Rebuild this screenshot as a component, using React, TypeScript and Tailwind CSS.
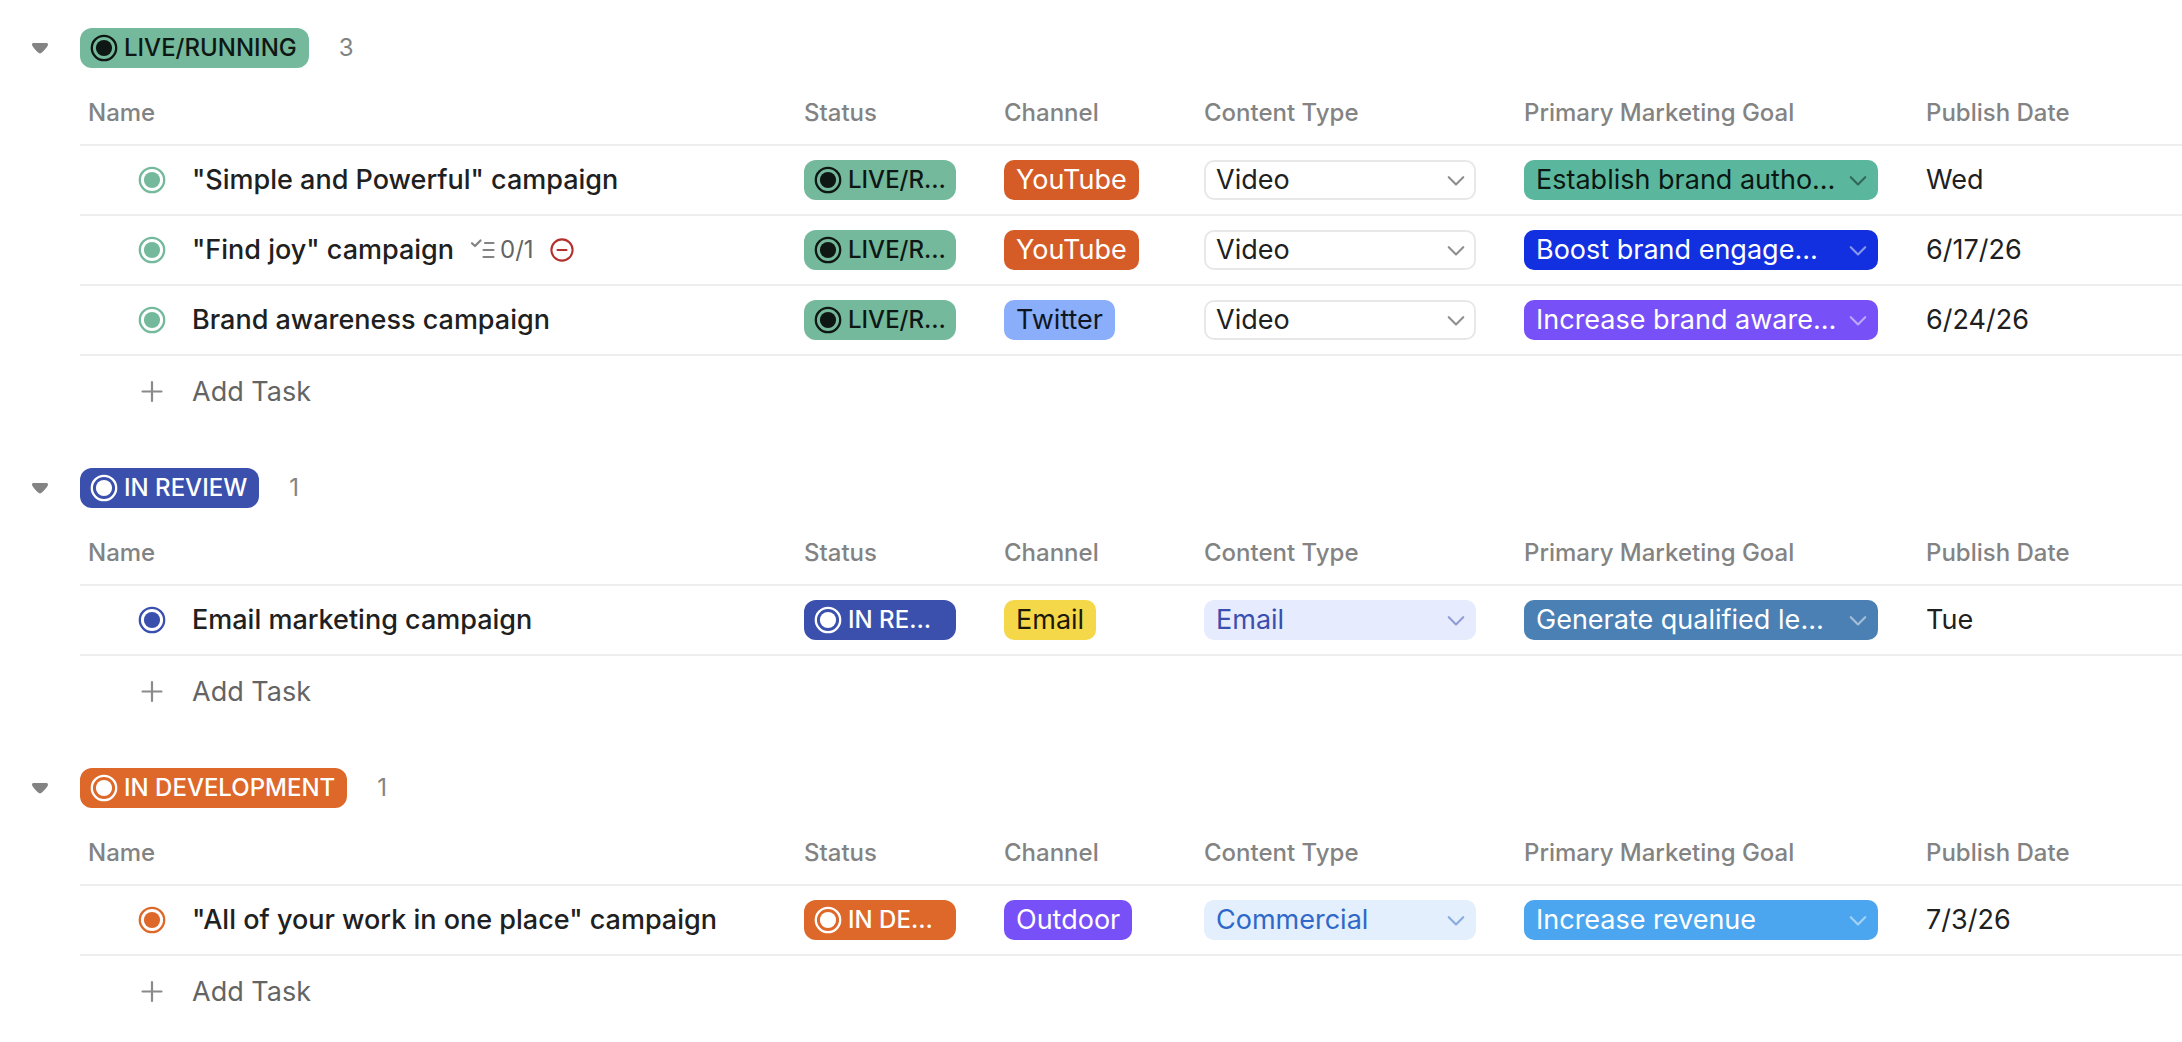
import { useState } from "react";

interface Select {
  label: string;
  style: string;
}

interface Task {
  name: string;
  subtasks?: string;
  blocked?: boolean;
  channel: Select;
  contentType: Select;
  goal: Select;
  publishDate: string;
}

interface Group {
  status: string;
  pill: string;
  icon: string;
  tasks: Task[];
}

const video: Select = {
  label: "Video",
  style: "bg-white text-[#202020] border-2 border-[#e8e8e8] pl-[10px]",
};

const youtube: Select = { label: "YouTube", style: "bg-[#d55c27] text-white" };

const groups: Group[] = [
  {
    status: "LIVE/RUNNING",
    pill: "bg-[#74b99b] text-[#0f1714]",
    icon: "text-[#74b99b]",
    tasks: [
      {
        name: '"Simple and Powerful" campaign',
        channel: youtube,
        contentType: video,
        goal: {
          label: "Establish brand authority",
          style: "bg-[#5ab79d] text-[#0c1713] pl-3",
        },
        publishDate: "Wed",
      },
      {
        name: '"Find joy" campaign',
        subtasks: "0/1",
        blocked: true,
        channel: youtube,
        contentType: video,
        goal: {
          label: "Boost brand engagement",
          style: "bg-[#1330e0] text-white pl-3",
        },
        publishDate: "6/17/26",
      },
      {
        name: "Brand awareness campaign",
        channel: { label: "Twitter", style: "bg-[#8aaefa] text-[#10161f]" },
        contentType: video,
        goal: {
          label: "Increase brand awareness",
          style: "bg-[#7850f8] text-white pl-3",
        },
        publishDate: "6/24/26",
      },
    ],
  },
  {
    status: "IN REVIEW",
    pill: "bg-[#3b4fad] text-white",
    icon: "text-[#3b4fad]",
    tasks: [
      {
        name: "Email marketing campaign",
        channel: { label: "Email", style: "bg-[#f4d849] text-[#1c1909]" },
        contentType: {
          label: "Email",
          style: "bg-[#e6ecfd] text-[#3b4fb0] pl-3",
        },
        goal: {
          label: "Generate qualified leads",
          style: "bg-[#4a80b4] text-white pl-3",
        },
        publishDate: "Tue",
      },
    ],
  },
  {
    status: "IN DEVELOPMENT",
    pill: "bg-[#dd6829] text-white",
    icon: "text-[#dd6829]",
    tasks: [
      {
        name: '"All of your work in one place" campaign',
        channel: { label: "Outdoor", style: "bg-[#7850f8] text-white" },
        contentType: {
          label: "Commercial",
          style: "bg-[#e3effd] text-[#2f68c8] pl-3",
        },
        goal: {
          label: "Increase revenue",
          style: "bg-[#4ba6ef] text-white pl-3",
        },
        publishDate: "7/3/26",
      },
    ],
  },
];

function StatusIcon({ className = "" }: { className?: string }) {
  return (
    <svg viewBox="0 0 28 28" className={`size-7 shrink-0 ${className}`}>
      <circle cx="14" cy="14" r="12.2" fill="none" stroke="currentColor" strokeWidth="2.3" />
      <circle cx="14" cy="14" r="8.1" fill="currentColor" />
    </svg>
  );
}

function SubtaskIcon() {
  return (
    <svg
      viewBox="0 0 26 24"
      className="w-[26px] h-6 shrink-0 text-[#838383]"
      fill="none"
      stroke="currentColor"
      strokeWidth="2.2"
      strokeLinecap="round"
      strokeLinejoin="round"
    >
      <path d="M2 5.2 5 8 10.5 2.4" />
      <path d="M15 5h8.5M13.5 12h10M13.5 19h10" />
    </svg>
  );
}

function BlockedIcon() {
  return (
    <svg
      viewBox="0 0 24 24"
      className="size-6 shrink-0 text-[#b5302d]"
      fill="none"
      stroke="currentColor"
      strokeWidth="2.1"
      strokeLinecap="round"
    >
      <circle cx="12" cy="12" r="10.6" />
      <path d="M7.5 12h9" />
    </svg>
  );
}

function PlusIcon() {
  return (
    <svg
      viewBox="0 0 28 28"
      className="size-7 shrink-0 text-[#8a8a8a]"
      stroke="currentColor"
      strokeWidth="2.2"
      strokeLinecap="round"
    >
      <path d="M14 4v19M4.5 13.5h19" />
    </svg>
  );
}

function Dropdown({ value, name }: { value: Select; name: string }) {
  return (
    <div className="grid items-center">
      <select
        aria-label={name}
        className={`col-start-1 row-start-1 w-full h-10 pr-10 rounded-[10px] appearance-none text-ellipsis overflow-hidden whitespace-nowrap ${value.style}`}
      >
        <option>{value.label}</option>
      </select>
      <svg
        viewBox="0 0 18 12"
        className={`col-start-1 row-start-1 justify-self-end w-[18px] h-3 mr-[11px] mt-[2px] pointer-events-none bg-transparent! border-0! p-0! opacity-50 ${value.style}`}
        fill="none"
        stroke="currentColor"
        strokeWidth="2.1"
        strokeLinecap="round"
        strokeLinejoin="round"
      >
        <path d="M1.8 2.2 9 9.4l7.2-7.2" />
      </svg>
    </div>
  );
}

function TaskRow({ task, group }: { task: Task; group: Group }) {
  return (
    <tr className="*:h-[70px] *:border-b-2 *:border-[#eeeeee] *:p-0">
      <td>
        <div className="flex items-center pl-[58px]">
          <StatusIcon className={group.icon} />
          <a href="#" className="ml-[26px] font-medium whitespace-nowrap">
            {task.name}
          </a>
          {task.subtasks && (
            <span className="ml-4 flex items-center gap-1 text-2xl text-[#646464]">
              <SubtaskIcon />
              {task.subtasks}
            </span>
          )}
          {task.blocked && (
            <span className="ml-4">
              <BlockedIcon />
            </span>
          )}
        </div>
      </td>
      <td>
        <button
          className={`flex items-center gap-1.5 w-[152px] h-10 px-[10px] rounded-xl text-2xl font-medium ${group.pill}`}
        >
          <StatusIcon />
          <span className="truncate">{group.status}</span>
        </button>
      </td>
      <td>
        <span className={`inline-flex items-center h-10 px-3 rounded-[10px] align-middle ${task.channel.style}`}>
          {task.channel.label}
        </span>
      </td>
      <td>
        <div className="pr-12">
          <Dropdown value={task.contentType} name="Content Type" />
        </div>
      </td>
      <td>
        <div className="pr-12">
          <Dropdown value={task.goal} name="Primary Marketing Goal" />
        </div>
      </td>
      <td>{task.publishDate}</td>
    </tr>
  );
}

function TaskGroup({ group }: { group: Group }) {
  const [open, setOpen] = useState(true);

  return (
    <section>
      <div className="flex items-center mb-[14px]">
        <button
          aria-label={`Toggle ${group.status}`}
          onClick={() => setOpen(!open)}
          className="flex items-center justify-center w-20 h-10 text-[#838383]"
        >
          <svg viewBox="0 0 16 11" className={`w-4 h-[11px] ${open ? "" : "-rotate-90"}`}>
            <path
              d="M1.2 0h13.6C15.8 0 16.3 1.6 15.7 2.8 14.6 5 11.5 8.3 9.2 10.1c-.8.6-1.6.6-2.4 0C4.5 8.3 1.4 5 .3 2.8-.3 1.6.2 0 1.2 0Z"
              fill="currentColor"
            />
          </svg>
        </button>
        <h2
          className={`flex items-center gap-1.5 h-10 pl-[10px] pr-3 rounded-xl text-2xl font-medium ${group.pill}`}
        >
          <StatusIcon />
          {group.status}
        </h2>
        <span className="ml-[30px] text-2xl text-[#838383]">{group.tasks.length}</span>
      </div>

      {open && (
        <div className="pl-20">
          <table className="w-full table-fixed border-separate border-spacing-0 text-left">
            <thead>
              <tr className="*:h-16 *:p-0 *:border-b-2 *:border-[#eeeeee] *:text-2xl *:font-medium *:text-[#838383]">
                <th>
                  <span className="pl-2">Name</span>
                </th>
                <th className="w-[200px]">Status</th>
                <th className="w-[200px]">Channel</th>
                <th className="w-[320px]">Content Type</th>
                <th className="w-[402px]">Primary Marketing Goal</th>
                <th className="w-[256px]">Publish Date</th>
              </tr>
            </thead>
            <tbody>
              {group.tasks.map((task) => (
                <TaskRow key={task.name} task={task} group={group} />
              ))}
            </tbody>
          </table>
          <button className="flex items-center h-[72px] pl-[58px] gap-[26px] text-[#646464]">
            <PlusIcon />
            Add Task
          </button>
        </div>
      )}
    </section>
  );
}

export default function App() {
  return (
    <main className="flex flex-col gap-10 pt-7 bg-white text-[#202020] text-[27px] leading-9 font-['Inter',sans-serif]">
      {groups.map((group) => (
        <TaskGroup key={group.status} group={group} />
      ))}
    </main>
  );
}
